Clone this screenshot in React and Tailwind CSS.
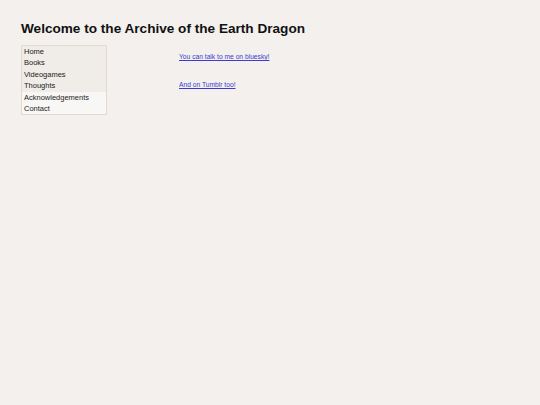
import React from "react";

const pages = ["Home", "Books", "Videogames", "Thoughts", "Acknowledgements", "Contact"];

export default function App() {
  return (
    <div className="min-h-[405px] bg-[#f3f0ed] px-[21px] pt-[19px] font-['Liberation_Sans',Arial,sans-serif] text-[#111]">
      <h1 className="text-[13.6px] font-bold leading-[20px]">Welcome to the Archive of the Earth Dragon</h1>
      <div className="mt-[6px] flex">
        <ul className="w-[86px] border border-[#e2dad2]">
          {pages.map((p, i) => (
            <li
              key={p}
              className={
                "h-[11.4px] pl-[2px] text-[7.5px] leading-[11.4px] text-[#222] " +
                (i < 4 ? "bg-[#f0ece8]" : "bg-[#f9f7f5]")
              }
            >
              {p}
            </li>
          ))}
        </ul>
        <div className="ml-[72px] flex flex-col pt-[7px] text-[6.7px] leading-[9px]">
          <a href="#" className="text-[#3c3cd0] underline">You can talk to me on bluesky!</a>
          <a href="#" className="mt-[19px] text-[#3c3cd0] underline">And on Tumblr too!</a>
        </div>
      </div>
    </div>
  );
}
